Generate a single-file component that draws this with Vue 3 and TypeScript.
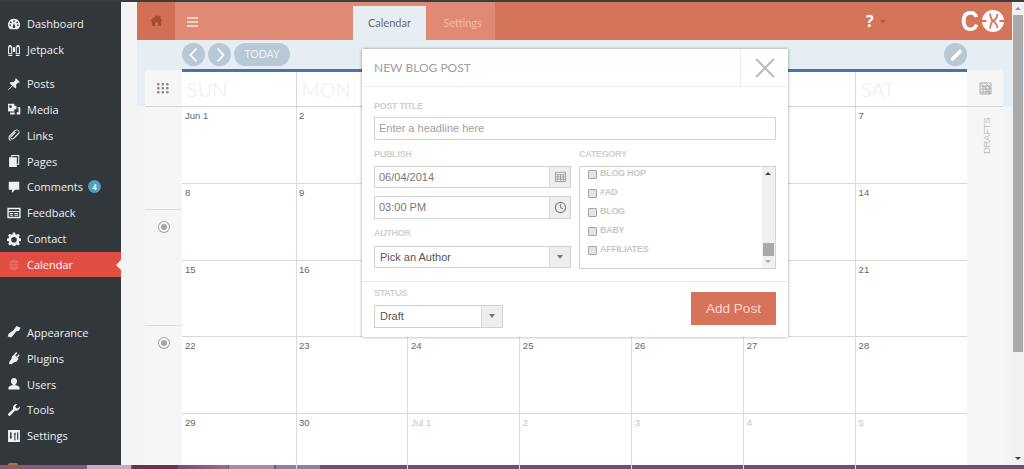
<script setup lang="ts">
const menuA = [
  { name: 'Dashboard', icon: 'dash' },
  { name: 'Jetpack', icon: 'jet' },
]
const menuB = [
  { name: 'Posts', icon: 'pin' },
  { name: 'Media', icon: 'media' },
  { name: 'Links', icon: 'link' },
  { name: 'Pages', icon: 'pages' },
  { name: 'Comments', icon: 'comment', badge: '4' },
  { name: 'Feedback', icon: 'feedback' },
  { name: 'Contact', icon: 'gear' },
  { name: 'Calendar', icon: 'cal', active: true },
]
const menuC = [
  { name: 'Appearance', icon: 'brush' },
  { name: 'Plugins', icon: 'plug' },
  { name: 'Users', icon: 'user' },
  { name: 'Tools', icon: 'wrench' },
  { name: 'Settings', icon: 'sliders' },
]
const groups = [menuA, menuB, menuC]
const days = ['SUN', 'MON', 'TUE', 'WED', 'THU', 'FRI', 'SAT']
const weeks = [
  ['Jun 1', '2', '3', '4', '5', '6', '7'],
  ['8', '9', '10', '11', '12', '13', '14'],
  ['15', '16', '17', '18', '19', '20', '21'],
  ['22', '23', '24', '25', '26', '27', '28'],
  ['29', '30', 'Jul 1', '2', '3', '4', '5'],
]
const categories = ['BLOG HOP', '#AD', 'BLOG', 'BABY', 'AFFILIATES']
function isMuted(w: number, d: number): boolean {
  return w === 4 && d >= 2
}
</script>

<template>
  <div class="page">
    <div class="work">
      <aside class="side">
        <div v-for="(group, g) in groups" :key="g" class="group" :class="'group' + g">
          <div v-for="item in group" :key="item.name" class="mi" :class="{ active: item.active }">
            <svg class="mic" viewBox="0 0 20 20" fill="currentColor" fill-rule="evenodd">
              <path v-if="item.icon === 'dash'" d="M10 2.500a8.500 8.500 0 0 0-7 13.500l1.500 1.500h11l1.500-1.500a8.500 8.500 0 0 0-7-13.500zM9.100 4.500h1.800v2.500H9.100zM5.200 6.200l1.800 1.800-1.200 1.200L4 7.400zm9.600 0L16 7.400l-1.800 1.800L13 8zM3.300 10.700h2.500v1.800H3.300zm10.900 0h2.500v1.800h-2.500zM10 8.500l1.600 4.700a1.800 1.800 0 1 1-3.200 0z" />
              <path v-else-if="item.icon === 'jet'" d="M2.500 3h3.500v1.500h1.500V16H1.500V5h1zm11.500 0h3.500v2h1v11h-6V4.500H14zM3 6v8.500h3V6zm11 0v8.500h3V6zM8.500 6h3v7h-3zM2 17h5.500v1.500H2zm10.500 0H18v1.500h-5.500z" />
              <path v-else-if="item.icon === 'pin'" d="M12.500 1.500l6 6-1.500.8-1-.5-3.200 3.200.6 3.500-1.600 1.800-3.600-3.600L2 18.500l-.5-.5 5.800-5.800L3.700 8.600l1.800-1.600 3.500.6L12.200 4.400l-.5-1z" />
              <path v-else-if="item.icon === 'media'" d="M1.500 2.500h9v3h3v5h-3v3h-9zm3.500 2a2 2 0 1 0 0 4 2 2 0 0 0 0-4zM4.500 15H11v3H4.500zM15 7.500h4V18h-5v-3.500h2.500v-5.500H15z" />
              <path v-else-if="item.icon === 'link'" d="M14 2a4 4 0 0 1 3.200 6.200L9.800 15.600a3 3 0 0 1-4.500-3.900l6.200-6.200 1.100 1.100-6.200 6.200a1.400 1.400 0 0 0 2.200 1.800l7.300-7.300a2.400 2.400 0 0 0-3.400-3.400L4.800 11.600a4 4 0 0 0 .7 5.900l-1.200 1.200a5.600 5.600 0 0 1-.7-8.200l7.700-7.500A4 4 0 0 1 14 2z" />
              <path v-else-if="item.icon === 'pages'" d="M6 1.500h11.500v14H14V18.500H3v-14h3zm1.500 1.500v1.500h6.500V14h2V3z" />
              <path v-else-if="item.icon === 'comment'" d="M2.500 2.500h15v11.500h-6l-4.500 4.500V14H2.500z" />
              <path v-else-if="item.icon === 'feedback'" d="M.5 2.500h19v15H.5zM2.500 4.500v2.500h15V4.500zm0 4v7h15v-7zM4 10h4.500v1.500H4zm6.500 0H16v1.500h-5.500zM4 12.500h4.500V14H4zm6.500 0H16V14h-5.500z" />
              <path v-else-if="item.icon === 'gear'" d="M8.300.8h3.400l.5 2.600 1.700.7L16.100 2.600l2.300 2.300-1.500 2.200.7 1.700 2.600.5v3.400l-2.600.5-.7 1.700 1.500 2.200-2.300 2.300-2.200-1.500-1.700.7-.5 2.600H8.300l-.5-2.600-1.700-.7L3.900 19.400 1.600 17.100l1.500-2.200-.7-1.700L-.2 12.700V9.300l2.600-.5.7-1.700L1.600 4.900 3.900 2.600l2.200 1.500 1.700-.7zM10 7a4 4 0 1 0 0 8 4 4 0 0 0 0-8z" />
              <path v-else-if="item.icon === 'cal'" d="M10 2.500c4 0 6.500 2 6.500 7.500s-2.500 7.500-6.500 7.500S3.500 15.500 3.500 10 6 2.500 10 2.500zM5 7v1.300h10V7zm0 4v1.300h10V11z" />
              <path v-else-if="item.icon === 'brush'" d="M13.500 1.500l6 2.500-2.500 4.500-3.500.5-2 2.500-5.500 6.500-5-1.500 1.500-4.500 6.500-4 2-3z" />
              <path v-else-if="item.icon === 'plug'" d="M13 1.500l1.700 1.200-3 4 2 1.500 3-3.500 1.500 1.300-3.200 3.700 1.500 1.500-3 4-3.500 1L6.500 19l-3.500-.5.500-3.500 3-3.500.5-3.500 3-2.500z" />
              <path v-else-if="item.icon === 'user'" d="M10 1.500a4.300 4.300 0 0 1 4.300 4.800c0 1.600-1 3.200-2.300 3.900v1.600c3.300.5 6 1.600 6 3.800v2.400H2v-2.400c0-2.200 2.700-3.300 6-3.800v-1.600C6.700 9.500 5.700 7.900 5.700 6.300A4.300 4.300 0 0 1 10 1.500z" />
              <path v-else-if="item.icon === 'wrench'" d="M18.500 5a5.500 5.500 0 0 1-7 5.800L5 17.800a2 2 0 0 1-3-2.800L8.800 8.500A5.500 5.500 0 0 1 15 1.500L12 4.800l.7 2.500 2.500.7z" />
              <path v-else d="M1.500 1.500h17v17h-17zM4.500 4.500v6.500H3.500l2 3.500 2-3.500h-1V4.500zm7 0l-2 3.500h1v8h1.500V8h1zm3 0v11h1.500v-11z" />
            </svg>
            <span class="mlabel">{{ item.name }}</span>
            <span v-if="item.badge" class="badge">{{ item.badge }}</span>
            <i v-if="item.active" class="notch"></i>
          </div>
        </div>
        <i class="ava"></i>
      </aside>

      <main class="main">
        <header class="head">
          <div class="home">
            <svg viewBox="0 0 14 14" width="13" height="13" fill="#a84c33"><path d="M7 1 0 7.500h2V13h3.500V9h3v4H12V7.500h2l-2.500-2.300V2h-2v1.300z" /></svg>
          </div>
          <div class="bar">
            <div class="burger"><i></i><i></i><i></i></div>
            <nav class="tabs">
              <span class="tab on">Calendar</span>
              <span class="tab">Settings</span>
            </nav>
          </div>
          <div class="right">
            <span class="help">?</span><i class="caret"></i>
            <div class="logo">
              <span class="c">C</span>
              <svg viewBox="0 0 22 22" width="22" height="22">
                <circle cx="11" cy="11" r="11" fill="#fff" />
                <path d="M0 11h4.500M22 11h-4.500M8 3.500C8.500 7 9.500 10 11 11 9.500 12 8.500 15 8 18.500M15.500 4C15 7 13 10 11 11 13 12 15 15 15.500 18" stroke="#d4745a" stroke-width="1.800" fill="none" />
              </svg>
            </div>
          </div>
        </header>

        <div class="sub">
          <div class="ctrl">
            <div class="navs">
              <span class="rnd"><svg viewBox="0 0 22 22" width="22" height="22"><path d="M13.500 4.500 7.500 11l6 6.500" stroke="#fff" stroke-width="1.800" fill="none" /></svg></span>
              <span class="rnd"><svg viewBox="0 0 22 22" width="22" height="22"><path d="M8.500 4.500l6 6.500-6 6.500" stroke="#fff" stroke-width="1.800" fill="none" /></svg></span>
              <span class="today">TODAY</span>
            </div>
            <span class="rnd"><svg viewBox="0 0 22 22" width="22" height="22"><path d="M7.500 15 15 7.500" stroke="#fff" stroke-width="3.600" stroke-linecap="round" fill="none" /></svg></span>
          </div>
        </div>

        <section class="cal">
          <div class="gl">
            <div class="g-head">
              <svg viewBox="0 0 13 13" width="13" height="13" fill="#8a8a8a">
                <template v-for="y in [1, 5, 9]" :key="y">
                  <rect v-for="x in [0, 4.500, 9]" :key="x" :x="x" :y="y" width="2.600" height="2.600" rx="1" />
                </template>
              </svg>
            </div>
            <div class="g1"></div>
            <div class="g2"><i class="rad"></i></div>
            <div class="g3"><i class="rad"></i></div>
          </div>

          <div class="grid">
            <div class="dayrow">
              <div v-for="d in days" :key="d" class="dayh">{{ d }}</div>
            </div>
            <div v-for="(w, wi) in weeks" :key="wi" class="week">
              <div v-for="(d, di) in w" :key="di" class="cell" :class="{ mute: isMuted(wi, di) }">{{ d }}</div>
            </div>
          </div>

          <div class="gr">
            <div class="g-head">
              <svg viewBox="0 0 13 13" width="13" height="13" fill="none" stroke="#a8a8a8" stroke-width=".9">
                <path d="M1 1h11v11H1zM1 4h11M4 4v8M7 4v8M10 4v8M1 7h11M1 10h11" />
                <path d="M2 1l9 11M6 1l6 6" />
              </svg>
            </div>
            <div class="drafts"><span>DRAFTS</span></div>
          </div>

          <div class="modal">
            <div class="m-head">
              <div class="m-title">NEW BLOG POST</div>
              <div class="m-close">
                <svg viewBox="0 0 22 22" width="22" height="22"><path d="M2 2l18 18M20 2 2 20" stroke="#bbb" stroke-width="2" fill="none" /></svg>
              </div>
            </div>
            <div class="m-body">
              <label class="lbl first">POST TITLE</label>
              <div class="inp ph">Enter a headline here</div>
              <div class="cols">
                <div class="col-l">
                  <label class="lbl">PUBLISH</label>
                  <div class="inp addon"><span>06/04/2014</span>
                    <b class="add"><svg viewBox="0 0 14 14" width="13" height="13" fill="none" stroke="#999"><path d="M1.500 2.500h11v10h-11zM1.500 5h11M4 5v7.500M7 5v7.500M10 5v7.500M1.500 7.500h11M1.500 10h11" stroke-width=".9" /></svg></b>
                  </div>
                  <div class="inp addon gap"><span>03:00 PM</span>
                    <b class="add"><svg viewBox="0 0 14 14" width="13" height="13" fill="none" stroke="#888" stroke-width="1.300"><circle cx="7" cy="7" r="5.500" /><path d="M7 3.500V7l2.500 1.500" /></svg></b>
                  </div>
                  <label class="lbl au">AUTHOR</label>
                  <div class="inp addon dark"><span>Pick an Author</span><b class="add"><i class="tri"></i></b></div>
                </div>
                <div class="col-r">
                  <label class="lbl">CATEGORY</label>
                  <div class="list">
                    <div class="opts">
                      <div v-for="c in categories" :key="c" class="opt"><i class="cb"></i><span>{{ c }}</span></div>
                    </div>
                    <div class="lsb">
                      <i class="up"></i>
                      <i class="thumb"></i>
                      <i class="down"></i>
                    </div>
                  </div>
                </div>
              </div>
            </div>
            <div class="m-foot">
              <div class="st">
                <label class="lbl stl">STATUS</label>
                <div class="inp addon dark status"><span>Draft</span><b class="add"><i class="tri"></i></b></div>
              </div>
              <button class="addpost" type="button">Add Post</button>
            </div>
          </div>
        </section>
      </main>

      <div class="vsb">
        <i class="vup"></i>
        <i class="vthumb"></i>
        <i class="vdown"></i>
      </div>
    </div>
    <footer class="task">
      <i class="t0"></i><i class="t1"></i><i class="t2"></i><i class="t3"></i><i class="t4"></i><i class="t5"></i>
    </footer>
  </div>
</template>

<style scoped>
.page {
  display: flex;
  flex-direction: column;
  width: 1024px;
  height: 469px;
  overflow: hidden;
  background: #f4f4f4;
  font-family: "Liberation Sans", Arial, sans-serif;
}
.work {
  flex: 1;
  min-height: 0;
  display: flex;
  border-top: 2px solid #3a3d40;
}
.side {
  position: relative;
  width: 121px;
  flex: none;
  background: #32373c;
  padding-top: 9px;
  box-sizing: border-box;
}
.ava {
  position: absolute;
  left: 8px;
  bottom: 0;
  width: 10px;
  height: 2px;
  border-radius: 5px 5px 0 0;
  background: #a97c24;
}
.group0 { margin-bottom: 8px; }
.group1 { margin-bottom: 42px; }
.mi {
  position: relative;
  display: flex;
  align-items: center;
  height: 25.850px;
  color: #eef0f1;
  font: 11px/1 "Open Sans", sans-serif;
}
.mic {
  width: 14px;
  height: 14px;
  margin: 0 6.500px;
  flex: none;
}
.active { background: #e14d43; color: #fff; }
.active .mic { color: #ea6a60; }
.notch {
  position: absolute;
  right: 0;
  top: 8px;
  border: 5px solid transparent;
  border-left: 0;
  border-right-color: #f4f4f4;
}
.badge {
  margin-left: 5px;
  width: 13px;
  height: 13px;
  border-radius: 50%;
  background: #4f9fbd;
  color: #e8f3f6;
  font: 700 8px/13px "Open Sans", sans-serif;
  text-align: center;
}
.main {
  flex: 1;
  min-width: 0;
  display: flex;
  flex-direction: column;
  margin-left: 16px;
}
.head {
  flex: none;
  display: flex;
  height: 38px;
  background: #d4745a;
}
.home {
  width: 38px;
  flex: none;
  display: flex;
  align-items: center;
  justify-content: center;
  padding-bottom: 2px;
  box-sizing: border-box;
  background: #d26f55;
}
.bar {
  width: 320px;
  flex: none;
  display: flex;
  background: #e08a75;
}
.burger {
  flex: none;
  display: flex;
  flex-direction: column;
  gap: 2px;
  width: 11px;
  margin: 15px 0 0 12px;
}
.burger i {
  display: block;
  height: 2px;
  background: #f5cfc2;
}
.tabs {
  display: flex;
  margin: 4px 0 0 155px;
}
.tab {
  width: 73px;
  box-sizing: border-box;
  text-align: center;
  font: 11px/34px Lato, sans-serif;
  color: #f0b9a8;
}
.tab.on {
  background: #e6eef3;
  color: #6b6b6b;
}
.right {
  flex: 1;
  display: flex;
  align-items: center;
}
.help {
  margin-left: 371px;
  color: #fff;
  font: 700 16px/1 "Open Sans", sans-serif;
}
.caret {
  margin-left: 6px;
  border: 3px solid transparent;
  border-top-color: #b5523a;
  border-bottom: 0;
}
.logo {
  margin-left: auto;
  margin-right: 8px;
  display: flex;
  align-items: center;
  height: 24px;
}
.c {
  display: block;
  width: 21px;
  color: #fff;
  font: 700 30px/24px "Liberation Sans", sans-serif;
  transform: scaleX(.82);
  transform-origin: left center;
}
.sub {
  flex: none;
  height: 66px;
  margin-bottom: -34px;
  background: #e6eef3;
}
.ctrl {
  margin: 3px 45px 0 45px;
  height: 26px;
  display: flex;
  justify-content: space-between;
  align-items: flex-start;
  border-bottom: 3px solid #4a74ac;
}
.navs {
  display: flex;
  gap: 3px;
}
.rnd {
  display: flex;
  align-items: center;
  justify-content: center;
  width: 23px;
  height: 23px;
  border-radius: 50%;
  background: #b7c9d4;
}
.today {
  width: 56px;
  height: 23px;
  border-radius: 12px;
  background: #b7c9d4;
  color: #eef3f6;
  font: 10.500px/23px Lato, sans-serif;
  text-align: center;
}
.cal {
  position: relative;
  flex: 1;
  min-height: 0;
  display: flex;
  margin: 0 9px 0 8px;
}
.gl, .gr {
  width: 37px;
  flex: none;
  margin-top: -2px;
  display: flex;
  flex-direction: column;
  background: #f6f6f6;
}
.gr { width: 36px; }
.g-head {
  flex: none;
  height: 37px;
  display: flex;
  align-items: center;
  justify-content: center;
  border-bottom: 1px solid #d2d2d2;
  box-sizing: border-box;
}
.g1, .g2, .g3 {
  display: flex;
  justify-content: center;
  align-items: flex-start;
  box-sizing: border-box;
  padding-top: 12px;
}
.g1 { height: 103px; border-bottom: 1px solid #dcdcdc; }
.g2 { height: 116px; border-bottom: 1px solid #dcdcdc; }
.g3 { flex: 1; }
.rad {
  display: block;
  width: 6px;
  height: 6px;
  border-radius: 50%;
  background: #a5a5a5;
  border: 2px solid #f6f6f6;
  box-shadow: 0 0 0 1px #a5a5a5;
}
.grid {
  flex: 1;
  min-width: 0;
  display: flex;
  flex-direction: column;
  background: #fff;
}
.dayrow {
  flex: none;
  height: 35px;
  display: flex;
  border-bottom: 1px solid #cfcfcf;
  box-sizing: border-box;
}
.dayh {
  flex: 1;
  min-width: 0;
  padding: 3px 0 0 5px;
  box-sizing: border-box;
  border-left: 1px solid #d9d9d9;
  color: #ececec;
  font: 300 20px/28px Lato, sans-serif;
}
.dayh:first-child, .cell:first-child {
  flex: none;
  width: 113.500px;
  border-left: 0;
}
.week {
  flex: none;
  height: 76.750px;
  display: flex;
  border-bottom: 1px solid #d8d8d8;
  box-sizing: border-box;
}
.week:last-child { border-bottom: 0; }
.cell {
  flex: 1;
  min-width: 0;
  box-sizing: border-box;
  border-left: 1px solid #dcdcdc;
  padding: 3px 0 0 2.500px;
  font-size: 9.500px;
  line-height: 12px;
  color: #666;
}
.cell:first-child { padding-left: 3px; }
.cell.mute { color: #c4c4c4; }
.drafts {
  flex: 1;
  display: flex;
  justify-content: center;
  padding: 14px 0 0 3px;
}
.drafts span {
  writing-mode: vertical-rl;
  transform: rotate(180deg);
  height: 33px;
  font-size: 9.500px;
  letter-spacing: -.3px;
  color: #bdbdbd;
  text-align: left;
}
.modal {
  position: absolute;
  left: 217px;
  top: -23px;
  width: 426px;
  height: 288px;
  background: #fff;
  box-shadow: 0 0 3px rgba(0, 0, 0, .4);
  display: flex;
  flex-direction: column;
  color: #777;
}
.m-head {
  flex: none;
  height: 38px;
  box-sizing: border-box;
  display: flex;
  border-bottom: 1px solid #ececec;
}
.m-title {
  flex: 1;
  padding: 13px 0 0 12px;
  font: 12px/1 Lato, sans-serif;
  color: #a0a0a0;
}
.m-close {
  width: 47px;
  border-left: 1px solid #ececec;
  display: flex;
  align-items: center;
  justify-content: center;
}
.m-body {
  flex: 1;
  padding: 0 12px;
  border-bottom: 1px solid #e6e6e6;
}
.lbl {
  display: block;
  font-size: 9px;
  font-weight: 700;
  letter-spacing: -.3px;
  line-height: 11px;
  color: #cfcfcf;
  margin: 9.500px 0 5.500px;
}
.lbl.first { margin: 14px 0 5px; }
.lbl.au { margin: 9.500px 0 6.500px; }
.lbl.stl { margin: 6px 0 6px; }
.inp {
  height: 22.500px;
  box-sizing: border-box;
  border: 1px solid #d2d2d2;
  padding-left: 4px;
  font-size: 11px;
  line-height: 20px;
  color: #777;
  display: flex;
  justify-content: space-between;
}
.inp.ph { color: #a0a0a0; }
.addon { width: 197px; }
.gap { margin-top: 8px; }
.dark { padding-left: 5px; }
.dark span { color: #555; }
.add {
  width: 20px;
  background: #eeeeee;
  border-left: 1px solid #d8d8d8;
  display: flex;
  align-items: center;
  justify-content: center;
}
.tri {
  border: 3px solid transparent;
  border-top: 4px solid #777;
  border-bottom: 0;
}
.cols {
  display: flex;
  gap: 8px;
}
.col-l { width: 197px; flex: none; }
.col-r { flex: 1; }
.list {
  height: 103px;
  box-sizing: border-box;
  border: 1px solid #d2d2d2;
  display: flex;
  overflow: hidden;
}
.opts {
  flex: 1;
  margin-top: -3.500px;
  padding-left: 8px;
}
.opt {
  display: flex;
  align-items: center;
  height: 19px;
  font-size: 9px;
  font-weight: 700;
  letter-spacing: -.3px;
  color: #c8c8c8;
}
.cb {
  width: 7px;
  height: 7px;
  margin: 3px 3px 0 0;
  border: 1px solid #a5a5a5;
  border-radius: 1px;
  background: #e4e4e4;
  flex: none;
}
.lsb {
  width: 13px;
  flex: none;
  background: #f0f0f0;
  position: relative;
}
.lsb .up, .lsb .down {
  position: absolute;
  left: 3px;
  border: 3px solid transparent;
}
.lsb .up {
  top: 5px;
  border-top: 0;
  border-bottom: 3px solid #444;
}
.lsb .down {
  bottom: 5px;
  border-bottom: 0;
  border-top: 3px solid #aaa;
}
.lsb .thumb {
  position: absolute;
  left: 1px;
  right: 1px;
  top: 76px;
  height: 13px;
  background: #a9a9a9;
}
.m-foot {
  flex: none;
  height: 55px;
  display: flex;
  justify-content: space-between;
  padding: 0 12px;
}
.status { width: 129px; }
.addpost {
  align-self: flex-start;
  margin-top: 10px;
  width: 85px;
  height: 33px;
  border: 0;
  padding: 0;
  background: #d6735a;
  color: #f5d9d0;
  font: 13.500px "Liberation Sans", sans-serif;
}
.vsb {
  width: 12px;
  flex: none;
  display: flex;
  flex-direction: column;
  align-items: center;
  background: #f1f1f1;
  padding: 5px 0 5px;
  box-sizing: border-box;
}
.vup {
  flex: none;
  border: 3px solid transparent;
  border-top: 0;
  border-bottom: 3px solid #999;
}
.vthumb {
  flex: none;
  width: 10px;
  height: 337px;
  margin-top: 5px;
  background: #aaa;
}
.vdown {
  flex: none;
  margin-top: auto;
  border: 3px solid transparent;
  border-bottom: 0;
  border-top: 3px solid #444;
}
.task {
  flex: none;
  display: flex;
  height: 4px;
  background: #6c4f7d;
}
.task i { display: block; flex: none; height: 4px; }
.t0 { width: 87px; background: linear-gradient(90deg, #8e5a72, #7d5a8c); }
.t1 { width: 44px; background: #c6aec0; margin-right: 2px; }
.t2 { width: 45px; background: #6e3050; margin-right: 2px; }
.t3 { width: 48px; background: linear-gradient(90deg, #7a4a80, #a8678a); margin-right: 1px; }
.t4 { width: 45px; background: #a98aa8; margin-right: 2px; }
.t5 { width: 44px; background: #8f7fa5; }
</style>
